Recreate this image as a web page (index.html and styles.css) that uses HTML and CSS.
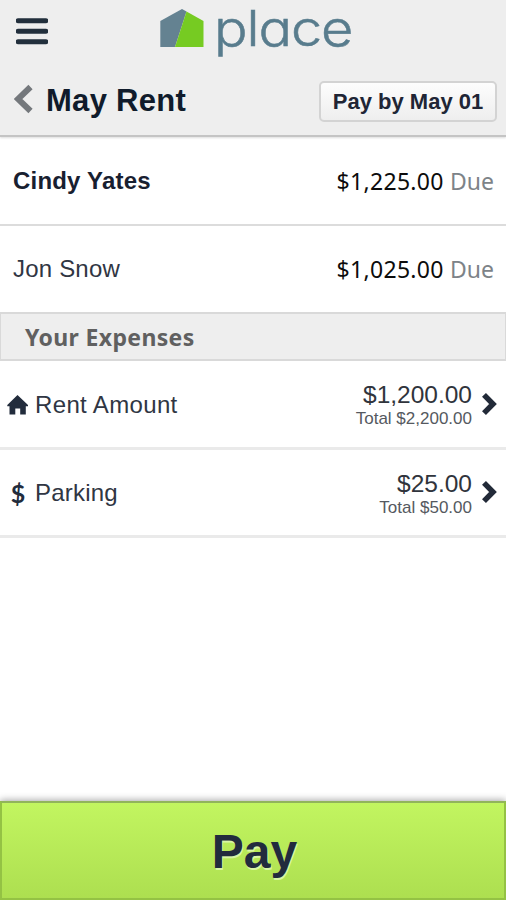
FILE: index.html
```html
<!DOCTYPE html>
<html lang="en">
<head>
<meta charset="utf-8">
<title>May Rent</title>
<link rel="stylesheet" href="styles.css">
</head>
<body>
<div class="app">
  <header class="header">
    <div class="brandbar">
      <svg class="menu" viewBox="0 0 32 28" width="32" height="28"><path d="M2.200 2.800h27.600M2.200 13.300h27.600M2.200 23.800h27.600" stroke="#222f3c" stroke-width="5" stroke-linecap="round" fill="none"/></svg>
      <div class="brand">
        <svg class="logo" viewBox="0 0 44 38" width="44" height="38"><path d="M0.300 12 22 0l4.500 2.500L15 38H0.300z" fill="#648291"/><path d="M26.500 2.500 43.500 12v26H15z" fill="#76cb22"/></svg>
        <span class="wordmark">place</span>
      </div>
    </div>
    <div class="titlebar">
      <svg class="back" viewBox="0 0 20 30" width="20" height="30"><path d="M16.500 3 4 15l12.500 12" fill="none" stroke="#74787c" stroke-width="6"/></svg>
      <h1 class="title">May Rent</h1>
      <button class="deadline">Pay by May 01</button>
    </div>
  </header>
  <main class="content">
    <div class="person"><span class="name me">Cindy Yates</span><span class="amount">$1,225.00 <span class="due">Due</span></span></div>
    <div class="person last"><span class="name">Jon Snow</span><span class="amount">$1,025.00 <span class="due">Due</span></span></div>
    <h2 class="section">Your Expenses</h2>
    <div class="expense first">
      <svg class="icon" viewBox="0 0 22 22" width="22" height="22"><path d="M10.500 1 21 11v1.300H18.800V20.500h-5.600v-6H8.300v6H2.500v-8.200H.3V11z" fill="#222c3c"/></svg>
      <span class="label rent">Rent Amount</span>
      <span class="sums"><span class="share">$1,200.00</span><span class="total">Total $2,200.00</span></span>
      <svg class="next" viewBox="0 0 16 24" width="16" height="24"><path d="M3 2.800 12 12l-9 9.200" fill="none" stroke="#222a38" stroke-width="5.500"/></svg>
    </div>
    <div class="expense">
      <span class="icon dollar">$</span>
      <span class="label">Parking</span>
      <span class="sums"><span class="share">$25.00</span><span class="total">Total $50.00</span></span>
      <svg class="next" viewBox="0 0 16 24" width="16" height="24"><path d="M3 2.800 12 12l-9 9.200" fill="none" stroke="#222a38" stroke-width="5.500"/></svg>
    </div>
  </main>
  <button class="pay">Pay</button>
</div>
</body>
</html>
```

FILE: styles.css
```css
* { box-sizing: border-box; }
body { margin: 0; background: #fff; color: #182030; font-family: "Liberation Sans", sans-serif; }
.app { display: flex; flex-direction: column; width: 506px; height: 900px; overflow: hidden; }
svg { display: block; flex: none; }
.header { height: 137px; flex: none; background: #eee; border-bottom: 2px solid #c4c4c4; box-shadow: 0 1px 2px #ddd; }
.brandbar { display: flex; align-items: flex-start; height: 66px; padding: 9px 0 0 16px; }
.menu { margin-top: 9px; }
.brand { display: flex; align-items: flex-start; margin-left: 112px; }
.wordmark { margin: -10px 0 0 10px; font: 300 49px/60px Inter, sans-serif; font-feature-settings: "cv11"; letter-spacing: -1px; color: #587c8d; transform: scaleX(1.14); transform-origin: left; -webkit-text-stroke: .5px #587c8d; }
.titlebar { display: flex; align-items: center; height: 70px; padding: 0 9px 0 14px; }
.back { margin-top: -4px; }
.title { margin: 0 auto 0 12px; font-size: 31px; line-height: 40px; letter-spacing: .3px; color: #101b2b; }
.deadline { width: 178px; height: 41px; padding: 0; border: 2px solid #d3d3d3; border-radius: 5px; background: linear-gradient(#fdfdfd, #eee); font: bold 22px/37px "Liberation Sans", sans-serif; color: #202535; }
.content { flex: 1; }
.person { display: flex; align-items: center; justify-content: space-between; height: 89px; padding: 1px 12px 0 13px; border-bottom: 2px solid #dcdcdc; font-size: 24px; }
.last { height: 86px; padding-top: 0; border-bottom: 0; }
.name { letter-spacing: .2px; color: #303643; }
.me { font-weight: bold; color: #182030; }
.amount { font-family: "Noto Sans", sans-serif; font-size: 23px; letter-spacing: .3px; color: #0c0c0c; }
.due { color: #7d8388; letter-spacing: 0; }
.section { display: flex; align-items: center; height: 49px; margin: 0; padding-left: 24px; border: 2px solid #d9d9d9; border-width: 2px 1px; background: #eee; font: bold 23px "Noto Sans", sans-serif; letter-spacing: .35px; color: #606060; }
.expense { display: flex; align-items: center; height: 88px; padding: 1px 9px 0 7px; border-bottom: 3px solid #eaeaea; }
.first { height: 89px; }
.icon { width: 22px; flex: none; text-align: center; }
.dollar { font: bold 25px/30px Lato, sans-serif; color: #222c3c; }
.label { margin-left: 6px; font-size: 24px; letter-spacing: .2px; color: #303643; }
.rent { letter-spacing: .35px; }
.sums { display: flex; flex-direction: column; align-items: flex-end; margin: 2px 0 0 auto; color: #30343c; }
.share { font-size: 24.500px; line-height: 26px; }
.total { font-size: 17px; line-height: 21px; color: #555960; }
.next { margin: -2px 0 0 9px; }
.pay { height: 99px; flex: none; padding: 2px 0 0 3px; border: 2px solid #94c244; border-top-color: #91b45b; background: linear-gradient(#c2f560, #addf50); box-shadow: 0 -1px 7px rgba(0,0,0,.35); font: bold 48px/90px "Liberation Sans", sans-serif; color: #222b3d; text-shadow: 1px 2px #d9f5a5; }
```
